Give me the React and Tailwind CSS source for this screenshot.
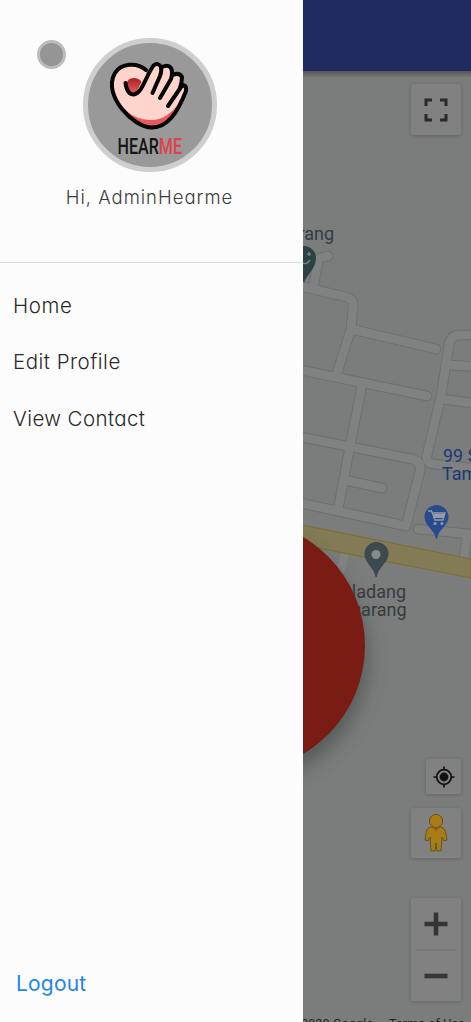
import React from "react";

const roads = [
  "M314 284 L318 262 Q319 257 324 257 L328 256",
  "M296 285 L346 297 Q354 299 353 307 L351 329 L337 373",
  "M351 329 L436 349",
  "M296 369 L427 396",
  "M296 436 L412 459 Q422 462 420 471 L406 526 L296 502",
  "M362 385 L350 446 L338 510",
  "M349 481 L382 488",
  "M480 335 L460 335 Q451 335 449 345 L441 396 L427 455 Q426 463 433 464 L480 469",
  "M449 365 L480 367",
  "M441 399 L480 404",
  "M418 529 L480 535",
  "M467 535 L464 558",
];

function StreetMap() {
  return (
    <svg className="absolute inset-0" width="168" height="951" viewBox="303 71 168 951">
      <defs>
        <filter id="soft" x="-30%" y="-30%" width="160%" height="160%">
          <feGaussianBlur stdDeviation="10" />
        </filter>
        <linearGradient id="dusk" x1="0" y1="0" x2="0" y2="1">
          <stop offset="0" stopColor="#000" stopOpacity=".3" />
          <stop offset="1" stopColor="#000" stopOpacity="0" />
        </linearGradient>
      </defs>
      <rect x="302" y="71" width="169" height="951" fill="#7b7d7c" />
      <g fill="none" strokeLinecap="round" strokeLinejoin="round">
        {roads.map((d) => <path key={d} d={d} stroke="#6d6f6e" strokeWidth="10.5" />)}
        {roads.map((d) => <path key={d} d={d} stroke="#808282" strokeWidth="8.7" />)}
        <path d="M345 552 L341 570" stroke="#838585" strokeWidth="8" />
      </g>
      <path d="M302 525 L471 559 V578 L302 545Z" fill="#837b55" stroke="#7e6e36" strokeWidth="1.2" />
      <g fontFamily="Roboto, sans-serif" fontSize="18">
        <text x="334" y="240" textAnchor="end" fill="#303d42">arang</text>
        <g fill="#1d3775">
          <text x="443" y="462" textLength="20" lengthAdjust="spacingAndGlyphs">99</text>
          <text x="467.5" y="462">S</text>
          <text x="442" y="480">Tam</text>
        </g>
        <g fill="#343b3e">
          <text x="406" y="597.500" textAnchor="end">ladang</text>
          <text x="406.500" y="615.500" textAnchor="end">garang</text>
        </g>
      </g>
      <path d="M304 283 C301 275 292 269 292 258 A12 12 0 0 1 316 258 C316 269 306 275 304 283Z" fill="#2c4244" />
      <path d="M302 262 Q306 266 310 260 M309 252 v4 M307 254 h4" fill="none" stroke="#718180" strokeWidth="1.5" />
      <path d="M436 539 C434 529 424.500 526 424.500 517 A12 12 0 0 1 448.500 517 C448.500 526 438 529 437 539Z" fill="#274b8e" />
      <g fill="none" stroke="#959ba3" strokeWidth="1.3">
        <path d="M428 511 h3.500 l3.500 9 h8 l2 -7 h-12" />
        <path d="M434 516 h10" strokeWidth="4" />
      </g>
      <circle cx="435" cy="523.500" r="1.500" fill="#959ba3" />
      <circle cx="442" cy="523.500" r="1.500" fill="#959ba3" />
      <path d="M375.500 577 C374 567 364.500 563 364.500 554 A12 12 0 0 1 388.500 554 C388.500 563 378 567 376.800 577Z" fill="#3c4a50" />
      <circle cx="376" cy="554.500" r="4.500" fill="#858b8b" />
      <circle cx="243" cy="658" r="124" fill="#39433f" opacity=".6" filter="url(#soft)" />
      <circle cx="239" cy="645.500" r="126" fill="#7a1c13" />
      <rect x="302" y="71" width="169" height="7" fill="url(#dusk)" />
    </svg>
  );
}

function Logo() {
  return (
    <svg className="-ml-[3px]" width="134" height="134" viewBox="83 38 134 134">
      <defs>
        <linearGradient id="berry" x1="0" y1="0" x2="0" y2="1">
          <stop offset="0" stopColor="#ad2027" />
          <stop offset="1" stopColor="#e35a5c" />
        </linearGradient>
        <clipPath id="palm">
          <path d="M112 84 C114 99 122 109 130 116 C137 123 144 127.500 151.500 127.500 C160 127.500 167 123 172 117 L186 94 L150 70Z" />
        </clipPath>
      </defs>
      <circle cx="150" cy="105" r="64.500" fill="#999" stroke="#cecece" strokeWidth="5" />
      <path
        d="M146 70 C137 62 121 63 115 73 C108 85 114 99 122 109 C130 119 142 127.500 151.500 127.500 C160 127.500 167 123 172 117 C178 110 182 101 186 91 Q187 86 183 85 L180 86 L182 79 Q182 74 177 74 L173 75 Q173 66 167 66.500 L162 67 Q160 62 154 65 Q152 67 146 78Z"
        fill="#ffd4cd"
      />
      <g clipPath="url(#palm)">
        <path d="M112 93 C122 110 133 119 149 120 C162 121 172 113 179 103 L172 126 L149 132 L124 123Z" fill="#e9595b" />
      </g>
      <path d="M126 84 Q128 78 133.500 78 Q139 78 141.500 82 L136 93 Q130 94 126 84Z" fill="url(#berry)" />
      <g fill="none" stroke="#050505" strokeWidth="4" strokeLinecap="round" strokeLinejoin="round">
        <path d="M146 70 C137 62 121 63 115 73 C108 85 114 99 122 109 C130 119 142 127.500 151.500 127.500 C160 127.500 167 123 172 117 C178 110 182 101 186 91 Q187 86 183 85 L181 87 L168 106" />
        <path d="M125.500 83 Q127 94.500 134 94.500 C142 93 145 78 153.500 65.500 Q158 62 161 67 Q162 71 160 76 L152.500 93" />
        <path d="M162 67 Q168 64 171 68 Q173 72 171 79 L160 98" />
        <path d="M173 75 Q179 72 182 77 Q182 82 180 88" />
      </g>
      <g fontFamily="Roboto, sans-serif" fontWeight="500" fontSize="22.500">
        <text x="117.500" y="154" textLength="64.500" lengthAdjust="spacingAndGlyphs" fill="#161616">HEAR<tspan fill="#df4248">ME</tspan></text>
      </g>
    </svg>
  );
}

function Control({ className, children }) {
  return (
    <div className={`absolute flex items-center justify-center rounded-[2px] bg-[#818181] shadow-[0_1px_4px_rgba(0,0,0,0.2)] ${className}`}>
      {children}
    </div>
  );
}

function MapControls() {
  return (
    <>
      <Control className="left-[108px] top-[13px] h-[51px] w-[50px]">
        <svg width="24" height="24" fill="none" stroke="#292929" strokeWidth="3">
          <path d="M2 8 V2 H8 M16 2 H22 V8 M22 16 V22 H16 M8 22 H2 V16" />
        </svg>
      </Control>
      <Control className="left-[123px] top-[688px] h-[35px] w-[35px]">
        <svg width="22" height="22" fill="none" stroke="#111" strokeWidth="1.700">
          <circle cx="11" cy="11" r="7.300" />
          <circle cx="11" cy="11" r="4.400" fill="#111" stroke="none" />
          <path d="M11 .500 V4 M11 18 V21.500 M.500 11 H4 M18 11 H21.500" />
        </svg>
      </Control>
      <Control className="left-[108px] top-[737px] h-[50px] w-[50px]">
        <svg width="24" height="40" viewBox="0 0 24 40" fill="#a87c14" stroke="#655322" strokeWidth="1">
          <path d="M7 14 Q2 15 2 21 L1 27 L4 28 L6 24 L7 38 H11 L12 30 L13 38 H17 L18 24 L20 28 L23 27 L22 21 Q21 15 17 14Z" />
          <circle cx="12" cy="8" r="6.600" />
          <path d="M8 14 L12 18 L16 14Z" fill="#96540d" stroke="none" />
        </svg>
      </Control>
      <Control className="left-[108px] top-[827px] h-[103px] w-[50px] flex-col">
        <svg width="50" height="103" stroke="#353535" strokeWidth="4.500">
          <path d="M13.500 26 H36.500 M25 14.500 V37.500 M13.500 78 H36.500" />
          <path d="M5 52 H45" stroke="#6e6e6e" strokeWidth="1" />
        </svg>
      </Control>
    </>
  );
}

const menuItems = [
  { label: "Home", tracking: "tracking-[0.6px]" },
  { label: "Edit Profile", tracking: "tracking-[0.5px]" },
  { label: "View Contact", tracking: "tracking-[0.4px]" },
];

export default function App() {
  return (
    <div className="flex h-[1022px] w-[471px] overflow-hidden bg-[#7b7d7c] font-['Inter','Open_Sans',sans-serif] [font-feature-settings:'cv11']">
      <aside className="relative z-10 flex w-[303px] shrink-0 flex-col bg-[#fcfcfc]">
        <div className="relative flex h-[263px] flex-col items-center border-b border-[#dcdede] pt-[38px]">
          <span className="absolute left-[37px] top-[40px] size-[29px] rounded-full border-[3px] border-[#bcbcbc] bg-[#959595]" />
          <Logo />
          <p className="-ml-[4px] mt-[11px] whitespace-nowrap text-[18.5px] font-light leading-7 tracking-[1px] text-[#3c3c3c]">Hi, AdminHearme</p>
        </div>
        <nav className="flex flex-col pl-[13px] pt-[15px]">
          {menuItems.map(({ label, tracking }) => (
            <a key={label} className={`flex h-[56.5px] items-center whitespace-nowrap text-[20.5px] font-light text-[#292929] ${tracking}`}>{label}</a>
          ))}
        </nav>
        <a className="mb-[22px] mt-auto pl-4 text-[21px] font-normal leading-8 tracking-[0.2px] text-[#2385e5]">Logout</a>
      </aside>
      <main className="flex w-[168px] flex-col">
        <header className="h-[71px] shrink-0 bg-[#1e2a60]" />
        <section className="relative flex-1 overflow-hidden">
          <StreetMap />
          <MapControls />
          <div className="absolute -left-[2px] top-[946px] flex whitespace-nowrap font-['Roboto',sans-serif] text-[12.5px] leading-[14px] tracking-[0.15px] text-[#252525]">
            <span className="w-[88px]">2020 Google</span>
            <span>Terms of Use</span>
          </div>
        </section>
      </main>
    </div>
  );
}
